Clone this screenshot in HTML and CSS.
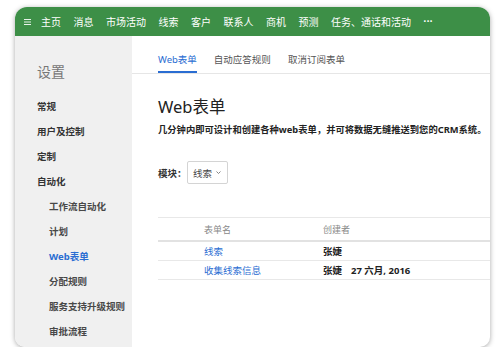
FILE: index.html
```html
<!DOCTYPE html>
<html lang="zh-CN">
<head>
    <meta charset="UTF-8">
    <title>设置 - Web表单</title>
    <link rel="stylesheet" href="styles.css">
</head>
<body>
    <div class="window">
        <div class="topbar">
            <span class="menu-icon">
                <svg width="7" height="6" viewBox="0 0 7 6"><path d="M0 0.5H7M0 3H7M0 5.5H7" stroke="#e8f2e9" stroke-width="1"/></svg>
            </span>
            <span>主页</span>
            <span>消息</span>
            <span>市场活动</span>
            <span>线索</span>
            <span>客户</span>
            <span>联系人</span>
            <span>商机</span>
            <span>预测</span>
            <span>任务、通话和活动</span>
            <span class="more">•••</span>
        </div>

        <div class="body">
            <div class="sidebar">
                <div class="side-title">设置</div>
                <div class="side-item">常规</div>
                <div class="side-item">用户及控制</div>
                <div class="side-item">定制</div>
                <div class="side-item">自动化</div>
                <div class="side-item sub">工作流自动化</div>
                <div class="side-item sub">计划</div>
                <div class="side-item sub active">Web表单</div>
                <div class="side-item sub">分配规则</div>
                <div class="side-item sub">服务支持升级规则</div>
                <div class="side-item sub">审批流程</div>
            </div>

            <div class="main">
                <div class="tabs">
                    <span class="tab active">Web表单</span>
                    <span class="tab">自动应答规则</span>
                    <span class="tab">取消订阅表单</span>
                </div>

                <div class="content">
                    <h1>Web表单</h1>
                    <p class="desc">几分钟内即可设计和创建各种web表单，并可将数据无缝推送到您的CRM系统。</p>

                    <div class="module">
                        <span class="module-label">模块：</span>
                        <div class="select">
                            <span>线索</span>
                            <svg width="5" height="3" viewBox="0 0 5 3"><path d="M0.5 0.5L2.5 2.5L4.5 0.5" fill="none" stroke="#777" stroke-width="0.9"/></svg>
                        </div>
                    </div>

                    <div class="table">
                        <div class="row head">
                            <span>表单名</span>
                            <span>创建者</span>
                        </div>
                        <div class="row">
                            <span class="link">线索</span>
                            <span class="owner">张婕</span>
                        </div>
                        <div class="row">
                            <span class="link">收集线索信息</span>
                            <span class="owner">张婕<span class="date">27 六月, 2016</span></span>
                        </div>
                    </div>
                </div>
            </div>
        </div>
    </div>
</body>
</html>
```

FILE: styles.css
```css
body {
    margin: 0;
    background-color: #fff;
    font-family: "Noto Sans", "Noto Sans CJK SC", sans-serif;
    color: #222;
}

.window {
    margin: 7px 0 0 15px;
    width: 475px;
    height: 340px;
    border-radius: 12px 12px 10px 10px;
    overflow: hidden;
    background-color: #fff;
    box-shadow: 0 1px 5px rgba(0, 0, 0, 0.35);
    display: flex;
    flex-direction: column;
}

/* top navigation */
.topbar {
    height: 29px;
    flex-shrink: 0;
    background-color: #3d8f47;
    color: #fff;
    font-size: 10px;
    display: flex;
    align-items: center;
    gap: 12.5px;
    padding-left: 9px;
}

.menu-icon {
    display: flex;
    margin-right: -2.5px;
}

.more {
    font-size: 7px;
    letter-spacing: 0.5px;
}

.body {
    flex: 1;
    display: flex;
}

/* settings sidebar */
.sidebar {
    width: 117px;
    flex-shrink: 0;
    background-color: #f0f0f0;
    padding: 27px 0 0 22px;
    box-sizing: border-box;
}

.side-title {
    font-size: 14px;
    line-height: 18px;
    color: #777;
    margin-bottom: 13px;
}

.side-item {
    font-size: 9.5px;
    line-height: 25px;
    font-weight: bold;
    color: #333;
}

.side-item.sub {
    padding-left: 12px;
    color: #484848;
}

.side-item.active {
    color: #2a6dd2;
}

/* main panel */
.main {
    flex: 1;
}

.tabs {
    display: flex;
    gap: 17px;
    padding: 18px 0 0 26px;
    border-bottom: 1px solid #e6e6e6;
}

.tab {
    font-size: 9.5px;
    line-height: 12px;
    color: #555;
    padding-bottom: 5px;
    border-bottom: 2px solid transparent;
}

.tab.active {
    color: #2a6dd2;
    border-bottom-color: #2a6dd2;
}

.content {
    padding-left: 26px;
}

h1 {
    font-size: 16.5px;
    line-height: 24px;
    font-weight: normal;
    color: #222;
    margin: 21px 0 4px;
}

.desc {
    font-size: 9.3px;
    line-height: 14px;
    font-weight: bold;
    color: #222;
    margin: 0;
    white-space: nowrap;
}

.module {
    display: flex;
    align-items: center;
    margin-top: 24px;
}

.module-label {
    font-size: 9.5px;
    font-weight: bold;
    color: #333;
    width: 29px;
}

.select {
    width: 41px;
    height: 23px;
    box-sizing: border-box;
    border: 1px solid #d4d4d4;
    border-radius: 2px;
    display: flex;
    align-items: center;
    justify-content: space-between;
    padding: 0 6px 0 5px;
    font-size: 9.5px;
    color: #444;
}

.table {
    margin-top: 33px;
    border-top: 1px solid #e8e8e8;
}

.row {
    display: grid;
    grid-template-columns: 119px 1fr;
    padding-left: 46px;
    height: 18px;
    align-items: center;
    font-size: 9.5px;
    border-bottom: 1px solid #e8e8e8;
}

.row.head {
    height: 22px;
    color: #888;
    font-size: 9px;
    border-bottom: 2px solid #e2e2e2;
}

.link {
    color: #2a6dd2;
}

.owner {
    font-weight: bold;
    color: #222;
}

.date {
    margin-left: 9px;
}
```
